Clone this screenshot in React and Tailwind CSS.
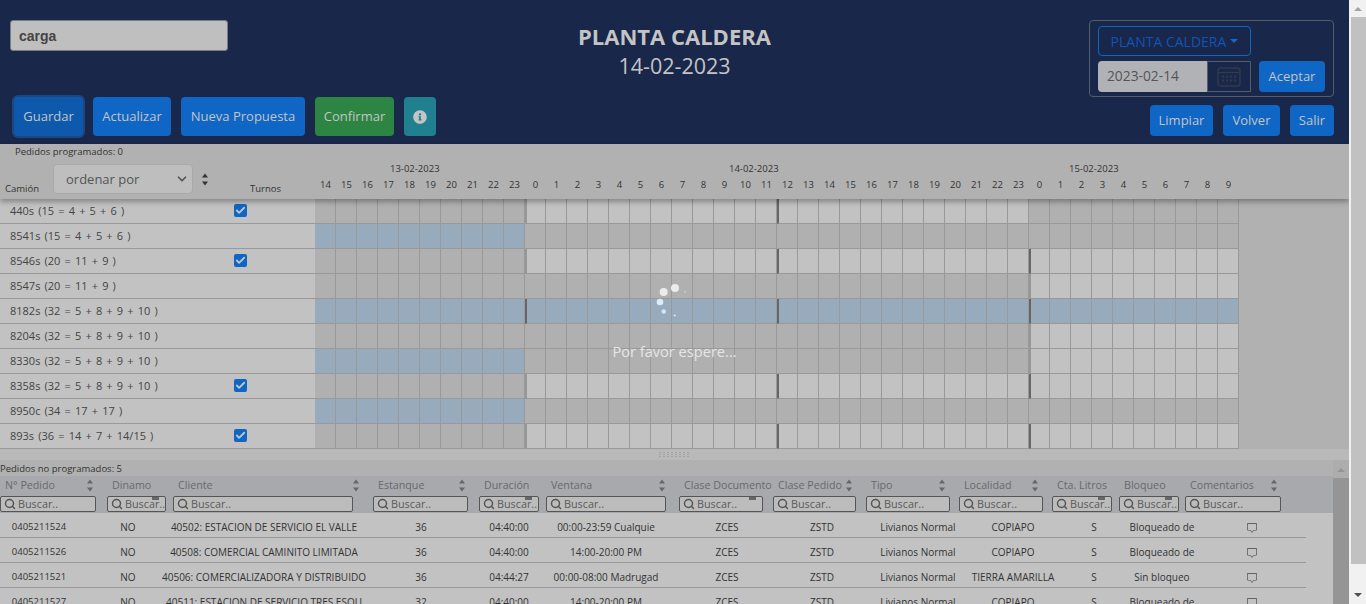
import React from 'react';
import { ChevronDown, Check, Search } from 'lucide-react';
import { FaInfoCircle } from 'react-icons/fa';
import { BsChatSquare } from 'react-icons/bs';

const hours = [14, 15, 16, 17, 18, 19, 20, 21, 22, 23, 0, 1, 2, 3, 4, 5, 6, 7, 8, 9, 10, 11, 12, 13, 14, 15, 16, 17, 18, 19, 20, 21, 22, 23, 0, 1, 2, 3, 4, 5, 6, 7, 8, 9];

const cellColors = { d: 'bg-[#b0b0b0]', l: 'bg-[#c2c2c2]', b: 'bg-[#98abbd]' };
const markColors = { g: 'border-l-2 border-l-[#979797]', k: 'border-l-2 border-l-[#666666]' };

// each row: first 10 cells, next 24, last 10, plus the day dividers at 10, 22 and 34
const trucks = [
  { label: '440s (15 = 4 + 5 + 6 )', checked: true, days: ['d', 'l', 'd'], marks: { 10: 'g', 22: 'k' } },
  { label: '8541s (15 = 4 + 5 + 6 )', days: ['b', 'd', 'd'], marks: {} },
  { label: '8546s (20 = 11 + 9 )', checked: true, days: ['d', 'l', 'l'], marks: { 10: 'g', 22: 'k', 34: 'k' } },
  { label: '8547s (20 = 11 + 9 )', days: ['d', 'd', 'l'], marks: { 34: 'g' } },
  { label: '8182s (32 = 5 + 8 + 9 + 10 )', days: ['b', 'b', 'b'], marks: { 10: 'k', 22: 'k', 34: 'k' } },
  { label: '8204s (32 = 5 + 8 + 9 + 10 )', days: ['d', 'd', 'l'], marks: { 34: 'g' } },
  { label: '8330s (32 = 5 + 8 + 9 + 10 )', days: ['b', 'd', 'l'], marks: { 34: 'g' } },
  { label: '8358s (32 = 5 + 8 + 9 + 10 )', checked: true, days: ['d', 'l', 'l'], marks: { 10: 'g', 22: 'k', 34: 'k' } },
  { label: '8950c (34 = 17 + 17 )', days: ['b', 'd', 'd'], marks: {} },
  { label: '893s (36 = 14 + 7 + 14/15 )', checked: true, days: ['d', 'l', 'l'], marks: { 10: 'g', 22: 'k', 34: 'k' } },
];

const columns = [
  { label: 'N° Pedido', w: 'w-[107px]', input: 'w-[96px]', sort: true },
  { label: 'Dinamo', w: 'w-[66px]', input: 'w-[59px]' },
  { label: 'Cliente', w: 'w-[200px]', input: 'w-[180px]', sort: true },
  { label: 'Estanque', w: 'w-[106px]', input: 'w-[95px]', sort: true },
  { label: 'Duración', w: 'w-[67px]', input: 'w-[60px]' },
  { label: 'Ventana', w: 'w-[133px]', input: 'w-[120px]', sort: true },
  { label: 'Clase Documento', w: 'w-[94px]', input: 'w-[84px]' },
  { label: 'Clase Pedido', w: 'w-[93px]', input: 'w-[83px]', sort: true },
  { label: 'Tipo', w: 'w-[93px]', input: 'w-[84px]', sort: true },
  { label: 'Localidad', w: 'w-[93px]', input: 'w-[84px]', sort: true },
  { label: 'Cta. Litros', w: 'w-[67px]', input: 'w-[60px]' },
  { label: 'Bloqueo', w: 'w-[66px]', input: 'w-[60px]' },
  { label: 'Comentarios', w: 'w-[106px]', input: 'w-[96px]', sort: true },
];

const orders = [
  ['0405211524', 'NO', '40502: ESTACION DE SERVICIO EL VALLE', '36', '04:40:00', '00:00-23:59 Cualquie', 'ZCES', 'ZSTD', 'Livianos Normal', 'COPIAPO', 'S', 'Bloqueado de'],
  ['0405211526', 'NO', '40508: COMERCIAL CAMINITO LIMITADA', '36', '04:40:00', '14:00-20:00 PM', 'ZCES', 'ZSTD', 'Livianos Normal', 'COPIAPO', 'S', 'Bloqueado de'],
  ['0405211521', 'NO', '40506: COMERCIALIZADORA Y DISTRIBUIDO', '36', '04:44:27', '00:00-08:00 Madrugad', 'ZCES', 'ZSTD', 'Livianos Normal', 'TIERRA AMARILLA', 'S', 'Sin bloqueo'],
  ['0405211527', 'NO', '40511: ESTACION DE SERVICIO TRES ESQU', '32', '04:40:00', '14:00-20:00 PM', 'ZCES', 'ZSTD', 'Livianos Normal', 'COPIAPO', 'S', 'Bloqueado de'],
];

const bodyCols = ['w-[94px] pr-[16px] text-[9.5px]', 'w-[68px]', 'w-[204px] overflow-hidden', 'w-[110px]', 'w-[66px]', 'w-[128px]', 'w-[114px]', 'w-[76px]', 'w-[116px]', 'w-[74px]', 'w-[88px]', 'w-[48px]'];

const SortArrows = ({ color = '#666666', className = '' }) => (
  <svg width="8" height="13" viewBox="0 0 8 13" className={className}>
    <path d="M4 0.5 L7 4.5 H1 Z M4 12.5 L1 8.5 H7 Z" fill={color} />
  </svg>
);

const Btn = ({ className = '', children }) => (
  <div className={`flex items-center justify-center rounded-[4px] text-[13px] text-[#c4c4c4] ${className}`}>
    {children}
  </div>
);

const CalendarIcon = () => (
  <svg width="24" height="20" viewBox="0 0 24 20" fill="none">
    <rect x="1" y="1" width="22" height="18" rx="2.5" stroke="#323a4b" strokeWidth="1.4" />
    <path d="M1 5.5 H23" stroke="#323a4b" strokeWidth="1.4" />
    <g fill="#323a4b">
      {[5, 9, 13, 17].map((x) => (
        <React.Fragment key={x}>
          <rect x={x} y="8.5" width="2.2" height="2.2" />
          <rect x={x} y="12.5" width="2.2" height="2.2" />
        </React.Fragment>
      ))}
    </g>
  </svg>
);

const Spinner = () => (
  <svg width="40" height="40" viewBox="0 0 40 40">
    <circle cx="29" cy="9" r="4" fill="#ececec" />
    <circle cx="17.7" cy="13" r="4" fill="#ececec" />
    <circle cx="14" cy="23" r="3.3" fill="#dcecf8" />
    <circle cx="17.7" cy="32.5" r="2.3" fill="#d4e6f4" />
    <circle cx="28.7" cy="36.5" r="1.1" fill="#d4e6f4" />
    <circle cx="39" cy="12.7" r="0.9" fill="#cfcfcf" />
  </svg>
);

const Grip = () => (
  <svg width="32" height="5" viewBox="0 0 32 5">
    <g fill="#a4a4a4">
      {[0, 4, 8, 12, 16, 20, 24, 28].map((x) => (
        <React.Fragment key={x}>
          <rect x={x} y="0" width="2" height="1" />
          <rect x={x} y="2" width="2" height="1" />
          <rect x={x} y="4" width="2" height="1" />
        </React.Fragment>
      ))}
    </g>
  </svg>
);

const Header = () => (
  <header className="h-[144px] bg-[#18274a] grid grid-cols-3">
    <div className="flex flex-col">
      <div className="mt-[20px] ml-[10px] w-[218px] h-[31px] rounded-[3px] bg-[#bfbfbf] border border-[#777b85] flex items-center px-2 pt-[1px] font-['Liberation_Sans',sans-serif] font-bold text-[14px] text-[#444444]">
        carga
      </div>
      <div className="mt-[46px] ml-[14px] flex gap-[10px]">
        <Btn className="h-[39px] pt-[1px] w-[69px] bg-[#0d5aad] shadow-[0_0_0_2px_#1c4681]">Guardar</Btn>
        <Btn className="h-[39px] pt-[1px] w-[78px] bg-[#0f66c4]">Actualizar</Btn>
        <Btn className="h-[39px] pt-[1px] w-[124px] bg-[#0f66c4]">Nueva Propuesta</Btn>
        <Btn className="h-[39px] pt-[1px] w-[79px] bg-[#2d8543]">Confirmar</Btn>
        <Btn className="h-[39px] w-[32px] bg-[#21808f]"><FaInfoCircle size={14} /></Btn>
      </div>
    </div>
    <div className="flex flex-col items-center pt-[22px] text-[#c4c4c4]">
      <div className="text-[22px] leading-[28px] font-bold">PLANTA CALDERA</div>
      <div className="text-[21.5px] leading-[32px]">14-02-2023</div>
    </div>
    <div className="flex flex-col items-end pr-[15px] pt-[20px]">
      <div className="w-[245px] h-[77px] border border-[#555c6a] rounded-[4px] pl-[8px] pt-[5px]">
        <div className="w-[153px] h-[30px] rounded-[4px] border border-[#0f66c4] flex items-center justify-center gap-[4px] text-[14px] text-[#1254b5]">
          PLANTA CALDERA
          <svg width="8" height="4" viewBox="0 0 8 4"><path d="M0 0 H8 L4 4 Z" fill="#1666d0" /></svg>
        </div>
        <div className="flex mt-[5px]">
          <div className="w-[109px] h-[31px] rounded-l-[4px] bg-[#b0b2b5] flex items-center pl-[9px] text-[13.8px] text-[#555555]">2023-02-14</div>
          <div className="w-[44px] h-[31px] border border-[#555c6a] flex items-center justify-center"><CalendarIcon /></div>
          <Btn className="w-[66px] h-[31px] ml-[8px] bg-[#0f66c4]">Aceptar</Btn>
        </div>
      </div>
      <div className="flex gap-[10px] mt-[8px]">
        <Btn className="w-[63px] h-[31px] bg-[#0f66c4]">Limpiar</Btn>
        <Btn className="w-[57px] h-[31px] bg-[#0f66c4]">Volver</Btn>
        <Btn className="w-[44px] h-[31px] bg-[#0f66c4]">Salir</Btn>
      </div>
    </div>
  </header>
);

const TimelineHeader = () => (
  <div className="relative z-10 h-[55px] flex bg-[#b1b1b1] shadow-[0_3px_5px_rgba(0,0,0,0.3)] text-[#333333] text-[9.5px] leading-[12px]">
    <div className="w-[315px] shrink-0">
      <div className="h-[20px] pl-[15px] pt-[2px]">Pedidos programados: 0</div>
      <div className="flex items-end h-[30px]">
        <div className="w-[53px] pl-[5px] mb-[-1px]">Camión</div>
        <div className="w-[140px] h-[30px] rounded-[4px] bg-[#bebebe] border border-[#a9a9a9] flex items-center justify-between pl-[12px] pr-[3px] text-[13px] text-[#555555]">
          ordenar por
          <ChevronDown size={14} strokeWidth={3} color="#555555" />
        </div>
        <SortArrows color="#333333" className="ml-[8px] mb-[8px]" />
        <div className="ml-[41px] mb-[-1px]">Turnos</div>
      </div>
    </div>
    <div>
      <div className="flex pt-[19px] h-[35px]">
        <div className="w-[210px] pl-[75px]">13-02-2023</div>
        <div className="w-[504px] pl-[204px]">14-02-2023</div>
        <div className="w-[210px] pl-[40px]">15-02-2023</div>
      </div>
      <div className="flex">
        {hours.map((h, i) => (
          <div key={i} className="w-[21px] text-center">{h}</div>
        ))}
      </div>
    </div>
  </div>
);

const TruckRow = ({ truck }) => {
  const [first, mid, last] = truck.days;
  return (
    <div className="flex h-[25px]">
      <div className="w-[315px] shrink-0 bg-[#c2c2c2] border-b border-[#999999] flex items-center text-[11px] text-[#444444]">
        <div className="w-[234px] pl-[10px] pt-[1px] [word-spacing:1.3px]">{truck.label}</div>
        {truck.checked && (
          <div className="w-[13px] h-[13px] rounded-[2px] bg-[#0f66c4] flex items-center justify-center mb-[2px]">
            <Check size={11} strokeWidth={4} color="#c4c4c4" />
          </div>
        )}
      </div>
      {hours.map((_, i) => {
        const kind = i < 10 ? first : i < 34 ? mid : last;
        const mark = truck.marks[i];
        return (
          <div
            key={i}
            className={`w-[21px] h-[25px] border-r border-b border-[#999999] ${cellColors[kind]} ${mark ? markColors[mark] : ''}`}
          />
        );
      })}
    </div>
  );
};

const FilterInput = ({ column }) => (
  <div className={`relative h-[16px] rounded-[2px] border border-[#555555] bg-[#bcbcbc] flex items-center pl-[3px] gap-[2px] overflow-hidden text-[10.8px] text-[#5a5a5a] ${column.input}`}>
    <Search size={12} strokeWidth={3} color="#555555" className="shrink-0" />
    <span>Buscar..</span>
    {!column.sort && <div className="absolute top-0 right-[6px] w-[7px] h-[3px] bg-[#666666]" />}
  </div>
);

const OrdersTable = () => (
  <div className="w-[1349px] flex">
    <div className="w-[1333px]">
      <div className="h-[16px] bg-[#b1b1b1] pt-[1px] text-[9.5px] leading-[16px] text-[#333333]">Pedidos no programados: 5</div>
      <div className="h-[37px] bg-[#a8a9ad] flex">
        {columns.map((c) => (
          <div key={c.label} className={`shrink-0 ${c.w}`}>
            <div className="h-[20px] pl-[5px] pr-[13px] pb-[1px] flex items-center justify-between whitespace-nowrap text-[10.7px] text-[#666a70]">
              {c.label}
              {c.sort && <SortArrows />}
            </div>
            <FilterInput column={c} />
          </div>
        ))}
      </div>
      <div className="bg-[#c2c2c2] h-[91px] overflow-hidden">
        {orders.map((row) => (
          <div key={row[0]} className="w-[1306px] h-[25px] border-b border-[#999999] flex items-center pt-[5px] text-[10px] text-[#333333]">
            {row.map((v, i) => (
              <div key={i} className={`shrink-0 flex justify-center whitespace-nowrap ${bodyCols[i]}`}>{v}</div>
            ))}
            <div className="w-[120px] pl-[12px] flex justify-center"><BsChatSquare size={10} color="#444444" /></div>
          </div>
        ))}
      </div>
    </div>
    <div className="w-[16px] bg-[#adadad] flex flex-col items-center">
      <svg width="8" height="4" viewBox="0 0 8 4" className="mt-[8px]"><path d="M4 0 L8 4 H0 Z" fill="#939393" /></svg>
      <div className="w-full flex-1 mt-[6px] bg-[#959595]" />
    </div>
  </div>
);

const PageScrollbar = () => (
  <div className="w-[17px] h-[604px] bg-[#f1f1f1] flex flex-col items-center">
    <svg width="8" height="4" viewBox="0 0 8 4" className="mt-[7px]"><path d="M4 0 L8 4 H0 Z" fill="#a3a3a3" /></svg>
    <div className="ml-[2px] w-[15px] h-[547px] mt-[6px] bg-[#c1c1c1]" />
    <svg width="8" height="4" viewBox="0 0 8 4" className="mt-[29px]"><path d="M0 0 H8 L4 4 Z" fill="#505050" /></svg>
  </div>
);

export default function App() {
  return (
    <div className="w-[1366px] h-[604px] overflow-hidden flex font-['Open_Sans',sans-serif]">
      <main className="relative w-[1349px] h-[604px] overflow-hidden bg-[#b1b1b1]">
        <Header />
        <TimelineHeader />
        {trucks.map((t) => (
          <TruckRow key={t.label} truck={t} />
        ))}
        <div className="h-[11px] bg-[#b9b9b9] flex items-center justify-center">
          <Grip />
        </div>
        <OrdersTable />
        <div className="absolute left-[646px] top-[279px]"><Spinner /></div>
        <div className="absolute left-0 right-0 top-[340px] text-center text-[14.6px] leading-[22px] text-[#e6e6e6]">Por favor espere...</div>
      </main>
      <PageScrollbar />
    </div>
  );
}
